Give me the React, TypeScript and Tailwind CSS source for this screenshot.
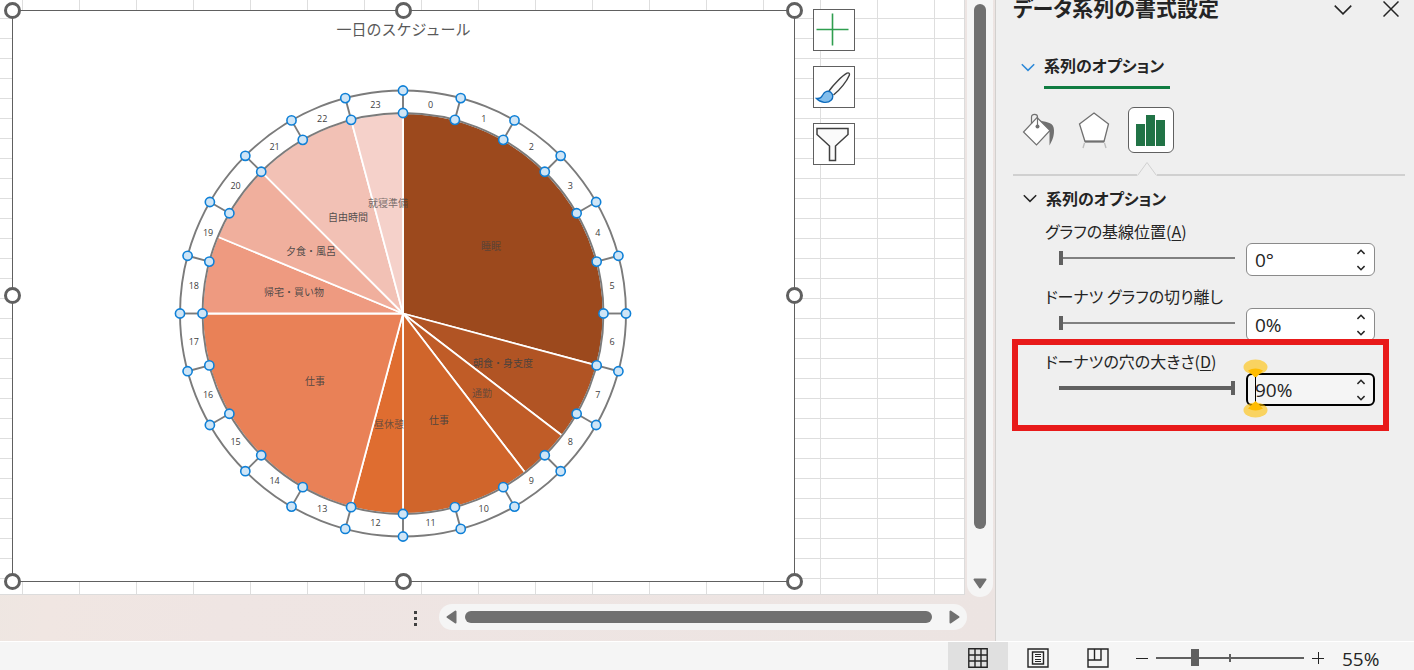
import { ReactNode } from "react";
import { clsx } from "clsx";

const CX = 391;
const CY = 303.5;
const R_OUTER = 223;
const R_INNER = 200.5;

const SLICES = [
  { label: "睡眠", from: 0, to: 7, fill: "#9c491d", x: 479, y: 235 },
  { label: "朝食・身支度", from: 7, to: 8.5, fill: "#b15424", x: 491, y: 352 },
  { label: "通勤", from: 8.5, to: 9.5, fill: "#c05c27", x: 470, y: 382 },
  { label: "仕事", from: 9.5, to: 12, fill: "#d0652b", x: 427, y: 409 },
  { label: "昼休憩", from: 12, to: 13, fill: "#df6d30", x: 377, y: 413 },
  { label: "仕事", from: 13, to: 18, fill: "#e98157", x: 303, y: 370 },
  { label: "帰宅・買い物", from: 18, to: 19.5, fill: "#ee9a80", x: 282, y: 281 },
  { label: "夕食・風呂", from: 19.5, to: 21, fill: "#f0af9d", x: 299, y: 240 },
  { label: "自由時間", from: 21, to: 23, fill: "#f2c1b5", x: 336, y: 206 },
  { label: "就寝準備", from: 23, to: 24, fill: "#f5d1ca", x: 376, y: 192 },
];

const HOURS = Array.from({ length: 24 }, (_, i) => i);

const FRAME_HANDLES = [
  [0, 0], [391, 0], [782, 0],
  [0, 285], [782, 285],
  [0, 571], [391, 571], [782, 571],
];

function point(hour: number, radius: number) {
  const a = (hour / 24) * Math.PI * 2;
  return [CX + radius * Math.sin(a), CY - radius * Math.cos(a)];
}

function slicePath(from: number, to: number) {
  const [x1, y1] = point(from, R_INNER);
  const [x2, y2] = point(to, R_INNER);
  return `M${CX} ${CY}L${x1} ${y1}A${R_INNER} ${R_INNER} 0 0 1 ${x2} ${y2}Z`;
}

function ScheduleChart() {
  return (
    <figure className="absolute left-3 top-2.5 h-[572px] w-[783px] border border-[#606060] bg-white">
      <figcaption className="pt-1.5 text-center text-[15px] leading-6 text-[#595959]">一日のスケジュール</figcaption>
      <svg className="absolute -left-px -top-px overflow-visible" width="783" height="572" role="img" aria-label="一日のスケジュール">
        {SLICES.map((s) => (
          <path key={s.from} d={slicePath(s.from, s.to)} fill={s.fill} stroke="#fff" strokeWidth="1.8" strokeLinejoin="round" />
        ))}
        <g fill="none" stroke="#7b7b7b" strokeWidth="1.9">
          <circle cx={CX} cy={CY} r={R_OUTER} />
          <circle cx={CX} cy={CY} r={R_INNER} />
          {HOURS.map((h) => {
            const [x1, y1] = point(h, R_INNER);
            const [x2, y2] = point(h, R_OUTER);
            return <line key={h} x1={x1} y1={y1} x2={x2} y2={y2} />;
          })}
        </g>
        <g className="text-[10px]" fill="#404040" textAnchor="middle" dominantBaseline="central">
          {SLICES.map((s) => (
            <text key={s.from} x={s.x} y={s.y} fillOpacity={s.to - s.from === 1 || s.from === 0 ? 0.7 : 0.9}>{s.label}</text>
          ))}
        </g>
        <g className="font-['Open_Sans'] text-[9px]" fill="#404040" textAnchor="middle" dominantBaseline="central">
          {HOURS.map((h) => {
            const [x, y] = point(h + 0.5, 211);
            return <text key={h} x={x} y={y}>{h}</text>;
          })}
        </g>
        <g fill="#cfe5f6" stroke="#0f80d7" strokeWidth="1.6">
          {HOURS.flatMap((h) =>
            [R_INNER, R_OUTER].map((r) => {
              const [x, y] = point(h, r);
              return <circle key={`${h}-${r}`} cx={x} cy={y} r="4.6" />;
            })
          )}
        </g>
        <g fill="#fff" stroke="#606060" strokeWidth="3">
          {FRAME_HANDLES.map(([x, y]) => (
            <circle key={`${x}-${y}`} cx={x + 0.5} cy={y + 0.5} r="7" />
          ))}
        </g>
      </svg>
    </figure>
  );
}

function ChartTools() {
  const button = "flex size-[42px] items-center justify-center border border-[#606060] bg-white";
  return (
    <div className="absolute left-[813px] top-[9px] flex flex-col gap-[15px]">
      <button className={button} aria-label="グラフ要素">
        <svg width="40" height="40" fill="none" stroke="#2f9e4f" strokeWidth="1.6">
          <path d="M18.5 3.5v32M2.5 19.5h32" />
        </svg>
      </button>
      <button className={button} aria-label="グラフ スタイル">
        <svg width="40" height="40" fill="none" strokeWidth="1.4">
          <path d="M15 24C19.500 17.500 28 9 33 6.200c1.800-.9 3 .2 2.300 2C33 14 26 23 19.500 28" stroke="#404040" fill="#fafafa" />
          <path d="M2.500 31.500c4 .3 5-1.200 6.500-4 1.600-3.200 5.500-4.300 8-2 2.400 2 2.200 5.500.3 7.500-3.500 3.700-10.800 3-14.800-1.500z" stroke="#0f6cbd" fill="#83beec" />
        </svg>
      </button>
      <button className={button} aria-label="グラフ フィルター">
        <svg width="40" height="40" fill="#fafafa" stroke="#404040" strokeWidth="1.5">
          <path d="M3 4.500h31v6L21.500 22v14.500h-6V22L3 10.500z" />
        </svg>
      </button>
    </div>
  );
}

function Workbook() {
  return (
    <main className="flex min-w-0 flex-1 flex-col bg-[linear-gradient(100deg,#ebe7e1_0%,#f0e6e2_14%,#efe5e3_30%,#ece4e2_100%)]">
      <div className="flex min-h-0 flex-1">
        <div className="relative mb-[2px] mr-[2px] flex-1 overflow-hidden border-b border-r border-[#dcdcdc] bg-white bg-[linear-gradient(to_right,#dedede_1px,transparent_1px),linear-gradient(to_bottom,#dedede_1px,transparent_1px)] bg-[size:57px_20px] bg-[position:22px_18px]">
          <ScheduleChart />
          <ChartTools />
        </div>
        <div className="mr-0.5 flex w-[26px] flex-col items-center rounded-b-full bg-[#f5f5f5] pt-1">
          <div className="w-3 flex-1 rounded-full bg-[#707070]" />
          <button className="flex h-[68px] items-end pb-2" aria-label="下へスクロール">
            <svg width="14" height="11" fill="#707070" stroke="#707070" strokeWidth="2" strokeLinejoin="round">
              <path d="M1.5 1.5h11L7 9.5z" />
            </svg>
          </button>
        </div>
      </div>
      <div className="flex h-11 items-start justify-end pr-7 pt-[7px]">
        <button className="mr-[22px] mt-[7px] flex flex-col gap-[3px]" aria-label="シート見出しの幅">
          <span className="size-[3px] bg-[#404040]" />
          <span className="size-[3px] bg-[#404040]" />
          <span className="size-[3px] bg-[#404040]" />
        </button>
        <div className="flex h-[26px] w-[528px] items-center justify-between rounded-full bg-[#f5f5f5] px-[7px]">
          <button aria-label="左へスクロール">
            <svg width="11" height="14" fill="#707070" stroke="#707070" strokeWidth="2" strokeLinejoin="round">
              <path d="M9.5 1.5v11L1.5 7z" />
            </svg>
          </button>
          <div className="ml-2 mr-[17px] h-3 flex-1 rounded-full bg-[#707070]" />
          <button aria-label="右へスクロール">
            <svg width="11" height="14" fill="#707070" stroke="#707070" strokeWidth="2" strokeLinejoin="round">
              <path d="M1.5 1.5v11l8-5.500z" />
            </svg>
          </button>
        </div>
      </div>
    </main>
  );
}

function Chevron({ className, width = 14 }: { className?: string; width?: number }) {
  return (
    <svg className={className} width={width} height={width / 2 + 2} viewBox="0 0 14 9" fill="none" stroke="currentColor" strokeWidth="1.5">
      <path d="M.8 1.200 7 7.400l6.200-6.200" vectorEffect="non-scaling-stroke" />
    </svg>
  );
}

interface FieldProps {
  id: string;
  label: ReactNode;
  name: string;
  value: string;
  max: number;
  amount: number;
  active?: boolean;
  children?: ReactNode;
}

function SliderField({ id, label, name, value, max, amount, active, children }: FieldProps) {
  return (
    <div className="relative">
      <label htmlFor={id} className="block h-[23px] pl-8 text-base leading-[23px]">{label}</label>
      <div className="flex h-[33px] items-start pl-[46px]">
        <input
          type="range"
          aria-label={name}
          max={max}
          defaultValue={amount}
          className={clsx(
            "mt-2 h-3.5 w-44 appearance-none bg-transparent [&::-webkit-slider-thumb]:h-3.5 [&::-webkit-slider-thumb]:w-1 [&::-webkit-slider-thumb]:appearance-none [&::-webkit-slider-thumb]:bg-[#606060]",
            active
              ? "[&::-webkit-slider-runnable-track]:h-1 [&::-webkit-slider-runnable-track]:bg-[#606060] [&::-webkit-slider-thumb]:-mt-[5px]"
              : "[&::-webkit-slider-runnable-track]:h-0.5 [&::-webkit-slider-runnable-track]:bg-[#808080] [&::-webkit-slider-thumb]:-mt-1.5"
          )}
        />
        <div
          className={clsx(
            "ml-[11px] flex h-[33px] w-[129px] items-center rounded-md",
            active ? "border-2 border-black bg-[#f5f5f5] pl-[7px] pr-2" : "border border-[#8a8a8a] bg-white pl-2 pr-[9px]"
          )}
        >
          <input id={id} defaultValue={value} className="w-0 flex-1 bg-transparent font-['Open_Sans'] text-[19px] leading-6 outline-none" />
          <div className="flex flex-col gap-2.5">
            <button aria-label="増やす"><Chevron width={8} className="rotate-180" /></button>
            <button aria-label="減らす"><Chevron width={8} /></button>
          </div>
        </div>
      </div>
      {children}
    </div>
  );
}

function CaretGrips() {
  return (
    <svg className="absolute left-[230px] top-1" width="25" height="66">
      <ellipse cx="12.5" cy="13" rx="12" ry="7.5" fill="#ffc000" fillOpacity=".6" />
      <path d="M5 16.500q7.500-4 15 0L12.500 24z" fill="#ffbc00" />
      <path d="M12.500 23v25" stroke="#000" />
      <ellipse cx="12.5" cy="56" rx="12" ry="7.5" fill="#ffc000" fillOpacity=".6" />
      <path d="M5 54.500q7.500 4 15 0L12.500 47z" fill="#ffbc00" />
    </svg>
  );
}

function FormatPane() {
  return (
    <aside className="w-[419px] shrink-0 overflow-hidden border-l border-[#d2d0ce] bg-[#efefef] pl-[17px] pr-[9px] text-[#242424] [font-feature-settings:'palt']">
      <header className="flex h-5 items-start">
        <h1 className="-mt-[3px] flex-1 whitespace-nowrap text-[21px] font-bold leading-5">データ系列の書式設定</h1>
        <button className="mr-[30px] mt-1" aria-label="作業ウィンドウのオプション"><Chevron width={20} /></button>
        <button className="mr-1.5 mt-px" aria-label="閉じる">
          <svg width="16" height="16" fill="none" stroke="currentColor" strokeWidth="1.5">
            <path d="m.5.5 15 15M15.500.5l-15 15" />
          </svg>
        </button>
      </header>

      <div className="mt-[33px] flex items-start">
        <Chevron className="ml-2 mt-2.5 text-[#2b88d8]" />
        <button className="ml-[9px] flex h-9 w-[126px] items-start whitespace-nowrap border-b-[3px] border-[#107c41] text-base font-bold leading-6">
          系列のオプション
        </button>
      </div>

      <div className="mt-[18px] flex items-center pl-2">
        <button className="flex w-[38px] justify-start" aria-label="塗りつぶしと線">
          <svg width="36" height="36" fill="none" stroke="#707070" strokeWidth="1.2">
            <path d="M19 8.500c8 2 14 2 14 10 0 7-2 10-4.500 15V20z" fill="#707070" stroke="none" />
            <path d="M16 5.500 29 18.500 15.500 33 2.500 20z" fill="#fff" />
            <path d="M10.500 12V5c0-3.500 6-3.500 6 0v9" />
            <circle cx="16.500" cy="14.500" r="2" fill="#707070" stroke="none" />
          </svg>
        </button>
        <button className="ml-[19px]" aria-label="効果">
          <svg width="32" height="38" fill="none" stroke="#707070" strokeWidth="1.3">
            <path d="M16 2 30.500 13 26 30.500H7L1.500 13z" fill="#fff" />
            <path d="M7 30.500h19" strokeWidth="2" />
            <path d="m6.500 32-1.500 5M26.500 32l1.500 5" strokeOpacity=".4" />
          </svg>
        </button>
        <button className="ml-[18px] flex size-[46px] items-center justify-center rounded-md border border-[#606060] bg-white" aria-label="系列のオプション">
          <svg width="30" height="32" fill="#217346">
            <path d="M0 10h9v22H0zM10 1h9v31h-9zM20 6h9v26h-9z" />
          </svg>
        </button>
      </div>

      <div className="mt-2 flex items-end">
        <div className="h-0.5 w-[124px] bg-[#d0d0d0]" />
        <svg width="20" height="15" fill="none" stroke="#d0d0d0">
          <path d="M.5 14.500 10 1.500l9.500 13" />
        </svg>
        <div className="h-0.5 flex-1 bg-[#d0d0d0]" />
      </div>

      <h2 className="mt-[10px] text-base font-bold leading-6">
        <button className="flex items-center">
          <Chevron className="ml-2.5 mr-[9px]" />
          系列のオプション
        </button>
      </h2>

      <div className="mt-2.5 flex flex-col gap-[9px]">
        <SliderField id="angle" name="グラフの基線位置" label={<>グラフの基線位置(<u className="underline-offset-2">A</u>)</>} value="0°" max={360} amount={0} />
        <SliderField id="explosion" name="ドーナツ グラフの切り離し" label="ドーナツ グラフの切り離し" value="0%" max={400} amount={0} />
        <SliderField id="hole" name="ドーナツの穴の大きさ" label={<>ドーナツの穴の大きさ(<u className="underline-offset-2">D</u>)</>} value="90%" max={90} amount={90} active>
          <div className="pointer-events-none absolute -left-px -top-[11px] h-[92px] w-[377px] border-6 border-[#e81a1a]" />
          <CaretGrips />
        </SliderField>
      </div>
    </aside>
  );
}

function StatusBar() {
  const view = "flex h-full w-[60px] items-center justify-center pt-1";
  return (
    <footer className="flex h-[29px] items-center justify-end border-t border-white bg-[#f5f5f5] text-[#242424]">
      <button className={clsx(view, "bg-[#e0e0e0]")} aria-label="標準">
        <svg width="20" height="20" fill="none" stroke="currentColor" strokeWidth="1.4">
          <path d="M.8.8h18.400v18.400H.8zM7 1v18M13 1v18M1 7h18M1 13h18" />
        </svg>
      </button>
      <button className={view} aria-label="ページ レイアウト">
        <svg width="22" height="20" fill="none" stroke="currentColor" strokeWidth="1.4">
          <path d="M1 1h20v18H1zM5.500 4h11v12h-11z" />
          <path d="M8 6.500h6M8 8.500h6M8 11.500h6M8 13.500h6" strokeWidth="1" />
        </svg>
      </button>
      <button className={view} aria-label="改ページ プレビュー">
        <svg width="22" height="20" fill="none" stroke="currentColor" strokeWidth="1.4">
          <path d="M1 1h20v18H1zM1 12h13V1M7.500 1v11" />
        </svg>
      </button>
      <button className="flex w-7 justify-center pt-1" aria-label="縮小">
        <svg width="12" height="12" stroke="currentColor"><path d="M0 6.500h12" /></svg>
      </button>
      <div className="relative flex pt-1">
        <input
          type="range"
          min={10}
          max={190}
          defaultValue={55}
          aria-label="ズーム"
          className="h-[17px] w-[148px] appearance-none bg-transparent [&::-webkit-slider-runnable-track]:h-0.5 [&::-webkit-slider-runnable-track]:bg-[#606060] [&::-webkit-slider-thumb]:-mt-2 [&::-webkit-slider-thumb]:h-[17px] [&::-webkit-slider-thumb]:w-2 [&::-webkit-slider-thumb]:appearance-none [&::-webkit-slider-thumb]:bg-[#606060]"
        />
        <span className="pointer-events-none absolute left-[73px] top-2 h-2 w-0.5 bg-[#606060]" />
      </div>
      <button className="flex w-7 justify-center pt-1" aria-label="拡大">
        <svg width="12" height="12" stroke="currentColor" fill="none"><path d="M0 6.500h12M6.500 0v12" /></svg>
      </button>
      <span className="w-[82px] pl-2.5 pt-1.5 font-['Open_Sans'] text-[19px] leading-5">55%</span>
    </footer>
  );
}

export default function App() {
  return (
    <div className="flex h-screen flex-col overflow-hidden font-['Noto_Sans_CJK_JP',sans-serif]">
      <div className="flex min-h-0 flex-1">
        <Workbook />
        <FormatPane />
      </div>
      <StatusBar />
    </div>
  );
}
